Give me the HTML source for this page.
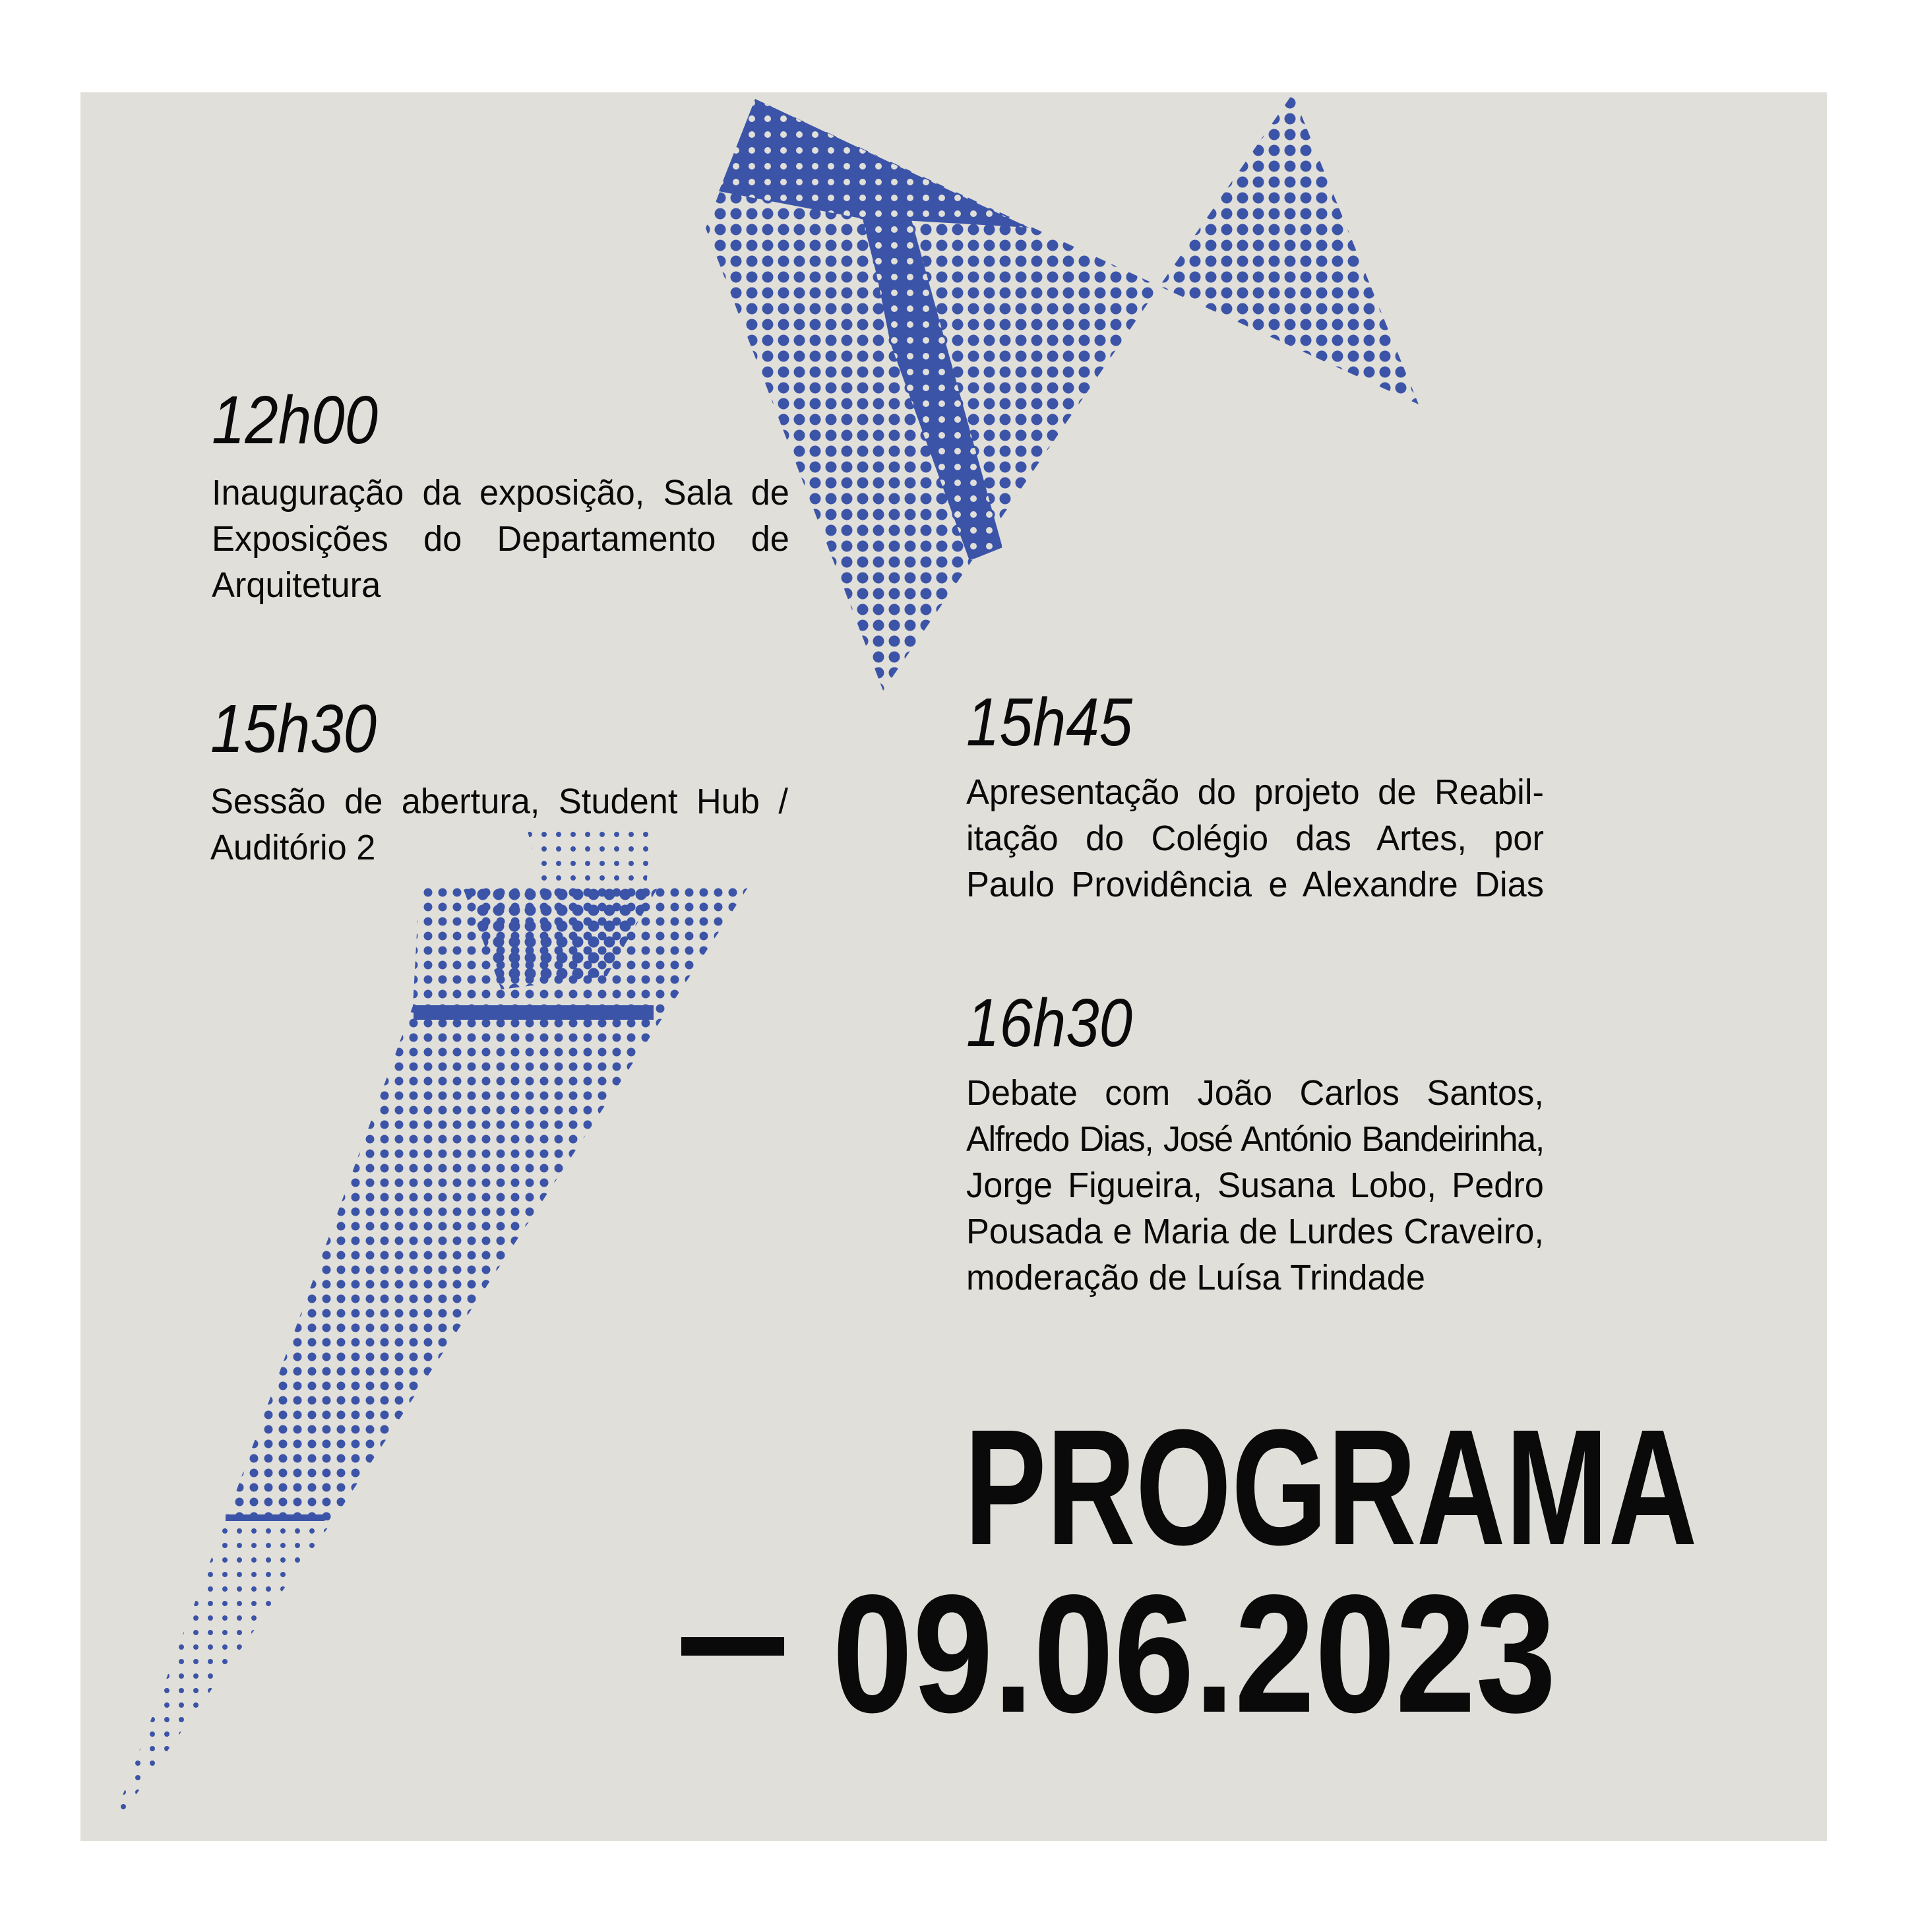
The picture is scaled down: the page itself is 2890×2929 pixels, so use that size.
<!DOCTYPE html>
<html><head><meta charset="utf-8"><style>
html,body{margin:0;padding:0;background:#fff;}
body{width:2890px;height:2929px;position:relative;overflow:hidden;font-family:"Liberation Sans",sans-serif;color:#0a0a0a;}
#panel{position:absolute;left:122px;top:140px;width:2648px;height:2651px;background:#e1dfd9;}
svg{position:absolute;left:0;top:0;}
.t{position:absolute;font-style:italic;font-size:103px;line-height:1;transform-origin:0 0;transform:scaleX(0.88);white-space:nowrap;}
.b{position:absolute;width:903px;font-size:54px;transform-origin:0 0;transform:scaleX(0.97);}
.b div{height:70px;line-height:70px;white-space:nowrap;text-align:justify;text-align-last:justify;}
.b div.l{text-align:left;text-align-last:left;}
.big{position:absolute;font-weight:bold;line-height:1;white-space:nowrap;transform-origin:0 0;}
</style></head><body>
<div id="panel"></div>
<svg width="2890" height="2929" viewBox="0 0 2890 2929">
<defs>
<pattern id="d1" width="24" height="24" patternUnits="userSpaceOnUse"><circle cx="12" cy="12" r="8.5" fill="#3b54a8"/></pattern>
<pattern id="d2" width="24" height="24" patternUnits="userSpaceOnUse"><rect width="24" height="24" fill="#3b54a8"/><circle cx="12" cy="12" r="5" fill="#e1dfd9"/></pattern>
<pattern id="d3" width="22" height="22" patternUnits="userSpaceOnUse"><circle cx="11" cy="11" r="4" fill="#3b54a8"/></pattern>
<pattern id="d4" width="22" height="22" patternUnits="userSpaceOnUse"><circle cx="11" cy="11" r="6.5" fill="#3b54a8"/></pattern>
</defs>
<polygon points="1145,150 1758,434 1339,1047 1070,346" fill="url(#d1)"/>
<polygon points="1145,150 1560,345 1300,330 1090,290" fill="url(#d2)"/>
<polygon points="1290,260 1370,290 1520,830 1470,850 1350,520 1330,420" fill="url(#d2)"/>
<polygon points="1758,434 1960,142 2151,613" fill="url(#d1)"/>
<polygon points="636,1341 1137,1341 505,2305 342,2305 626,1525" fill="url(#d4)"/>
<polygon points="700,1341 1000,1341 920,1480 760,1500" fill="url(#d1)"/>
<polygon points="800,1260 990,1250 980,1341 820,1341" fill="url(#d3)"/>
<polygon points="342,2305 505,2305 165,2778" fill="url(#d3)"/>
<rect x="627" y="1524" width="364" height="22" fill="#3b54a8"/>
<rect x="342" y="2296" width="150" height="10" fill="#3b54a8"/>
</svg>

<div class="t" style="left:321px;top:585px">12h00</div>
<div class="b" style="left:321px;top:712px">
<div>Inauguração da exposição, Sala de</div>
<div>Exposições do Departamento de</div>
<div class="l">Arquitetura</div>
</div>

<div class="t" style="left:319px;top:1053px">15h30</div>
<div class="b" style="left:319px;top:1180px">
<div>Sessão de abertura, Student Hub /</div>
<div class="l">Auditório 2</div>
</div>

<div class="t" style="left:1465px;top:1043px">15h45</div>
<div class="b" style="left:1465px;top:1166px">
<div>Apresentação do projeto de Reabil-</div>
<div>itação do Colégio das Artes, por</div>
<div>Paulo Providência e Alexandre Dias</div>
</div>

<div class="t" style="left:1465px;top:1499px">16h30</div>
<div class="b" style="left:1465px;top:1622px">
<div>Debate com João Carlos Santos,</div>
<div style="letter-spacing:-1.5px">Alfredo Dias, José António Bandeirinha,</div>
<div>Jorge Figueira, Susana Lobo, Pedro</div>
<div>Pousada e Maria de Lurdes Craveiro,</div>
<div class="l">moderação de Luísa Trindade</div>
</div>

<div class="big" style="left:1462px;top:2130px;font-size:250px;transform:scaleX(0.748)">PROGRAMA</div>
<div style="position:absolute;left:1033px;top:2482px;width:156px;height:28px;background:#0a0a0a"></div>
<div class="big" style="left:1262px;top:2380px;font-size:255px;transform:scaleX(0.86)">09.06.2023</div>
</body></html>
